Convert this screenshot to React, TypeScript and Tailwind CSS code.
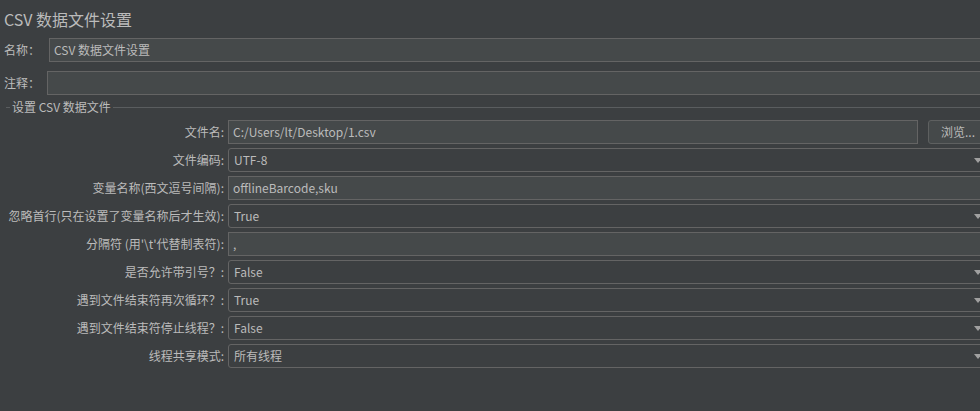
import React from 'react';

const FONT = '"Noto Sans CJK SC", "Noto Sans", "Liberation Sans", sans-serif';

type Row =
  | { label: string; kind: 'text'; value: string; browse?: boolean }
  | { label: string; kind: 'combo'; value: string };

const rows: Row[] = [
  { label: '文件名:', kind: 'text', value: 'C:/Users/lt/Desktop/1.csv', browse: true },
  { label: '文件编码:', kind: 'combo', value: 'UTF-8' },
  { label: '变量名称(西文逗号间隔):', kind: 'text', value: 'offlineBarcode,sku' },
  { label: '忽略首行(只在设置了变量名称后才生效):', kind: 'combo', value: 'True' },
  { label: "分隔符 (用'\\t'代替制表符):", kind: 'text', value: ',' },
  { label: '是否允许带引号？:', kind: 'combo', value: 'False' },
  { label: '遇到文件结束符再次循环？:', kind: 'combo', value: 'True' },
  { label: '遇到文件结束符停止线程？:', kind: 'combo', value: 'False' },
  { label: '线程共享模式:', kind: 'combo', value: '所有线程' },
];

const TextField = ({ value }: { value: string }) => (
  <div className="flex-1 h-[24px] flex items-center px-[4px] bg-[#45494a] border border-[#646464] text-[12px] text-[#bbbbbb] whitespace-nowrap overflow-hidden">
    {value}
  </div>
);

const Combo = ({ value }: { value: string }) => (
  <div className="flex-1 h-[24px] flex items-center justify-between pl-[5px] pr-[7px] bg-[#3c3f41] border border-[#646464] rounded-[3px] text-[12px] text-[#bbbbbb]">
    <span>{value}</span>
    <svg width="8" height="5" viewBox="0 0 8 5">
      <path d="M0 0 H8 L4 5 Z" fill="#a0a0a0" />
    </svg>
  </div>
);

export default function App() {
  return (
    <div
      className="w-[980px] h-[411px] overflow-hidden bg-[#3c3f41] text-[#bbbbbb]"
      style={{ fontFamily: FONT }}
    >
      <div className="w-[990px]">
        <div className="h-[38px] flex items-center pl-[4px] text-[16px] pb-[1px]">CSV 数据文件设置</div>

        <div className="flex items-center h-[24px]">
          <div className="w-[49px] pl-[4px] text-[12px]">名称：</div>
          <TextField value="CSV 数据文件设置" />
        </div>

        <div className="flex items-center h-[24px] mt-[9px]">
          <div className="w-[47px] pl-[4px] text-[12px]">注释：</div>
          <TextField value="" />
        </div>

        <div className="flex items-center h-[25px] pb-[1px]">
          <div className="ml-[6px] w-[4px] h-px bg-[#5a5d5f]" />
          <div className="px-[2px] text-[12px]">设置 CSV 数据文件</div>
          <div className="flex-1 h-px bg-[#5a5d5f]" />
        </div>

        <div className="flex flex-col gap-[4px]">
          {rows.map((r) => (
            <div key={r.label} className="flex items-center h-[24px]">
              <div className="w-[228px] pr-[4px] text-right text-[12px] whitespace-nowrap">{r.label}</div>
              {r.kind === 'text' ? (
                <>
                  <TextField value={r.value} />
                  {r.kind === 'text' && r.browse && (
                    <div className="ml-[10px] w-[62px] h-[24px] flex items-center pl-[12px] bg-[#45494a] border border-[#5e6060] rounded-[3px] text-[12px] text-[#bbbbbb]">
                      浏览...
                    </div>
                  )}
                </>
              ) : (
                <Combo value={r.value} />
              )}
            </div>
          ))}
        </div>
      </div>
    </div>
  );
}
